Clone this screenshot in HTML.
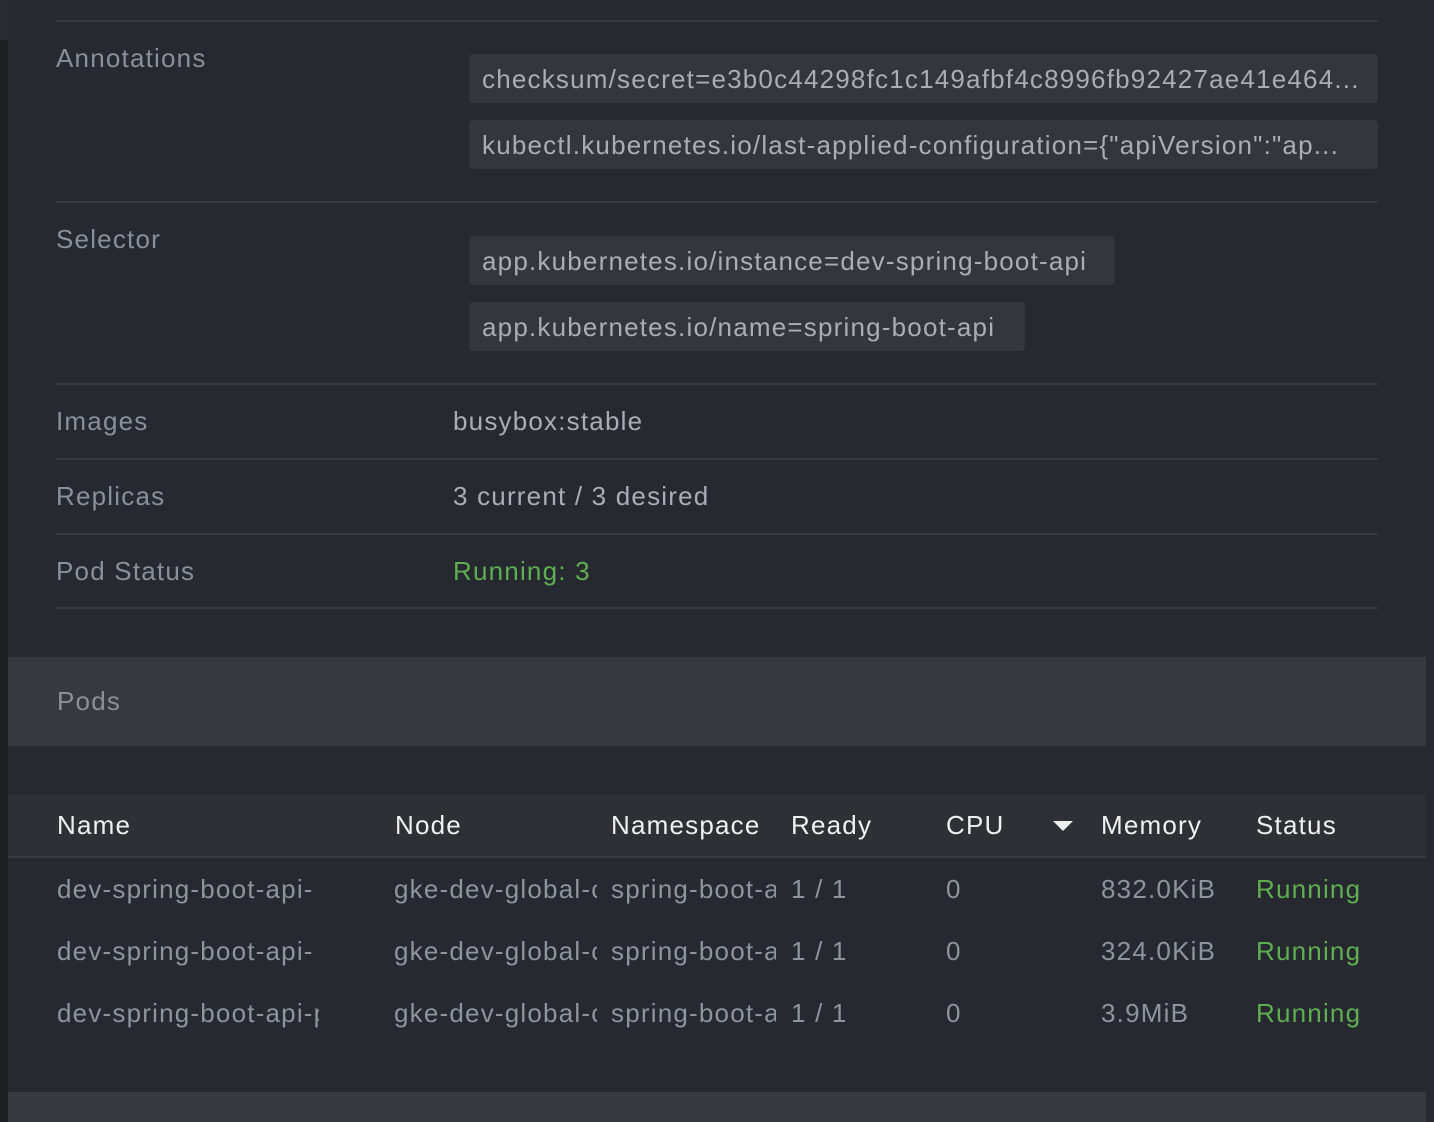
<!DOCTYPE html>
<html><head><style>
body{margin:0;width:1434px;height:1122px;background:#262930;font-family:"Liberation Sans",sans-serif;position:relative;overflow:hidden;font-size:26px;letter-spacing:1.2px}
.a{position:absolute;white-space:nowrap}
.lbl{color:#8a909b}
.val{color:#a9adb4}
.hr{position:absolute;left:56px;width:1322px;height:2px;background:#363940}
.chip{position:absolute;left:469px;height:49px;background:#34363c;border-radius:4px;color:#a9adb4;line-height:51px;padding:0 13px;box-sizing:border-box;white-space:nowrap;overflow:hidden}
.g{color:#5fae51}
.th{color:#f0f0f0}
.td{color:#8e949e;overflow:hidden}
</style></head><body>
<div class="a" style="left:0;top:0;width:8px;height:1122px;background:#1e1f23"></div>
<div class="a" style="left:0;top:0;width:8px;height:40px;background:#2b2c31"></div>
<div class="hr" style="top:20px"></div>
<div class="a lbl" style="left:56px;top:43px">Annotations</div>
<div class="chip" style="top:54px;width:909px">checksum/secret=e3b0c44298fc1c149afbf4c8996fb92427ae41e464...</div>
<div class="chip" style="top:120px;width:909px">kubectl.kubernetes.io/last-applied-configuration={"apiVersion":"ap...</div>
<div class="hr" style="top:201px"></div>
<div class="a lbl" style="left:56px;top:224px">Selector</div>
<div class="chip" style="top:236px;width:646px">app.kubernetes.io/instance=dev-spring-boot-api</div>
<div class="chip" style="top:302px;width:556px">app.kubernetes.io/name=spring-boot-api</div>
<div class="hr" style="top:383px"></div>
<div class="a lbl" style="left:56px;top:406px">Images</div>
<div class="a val" style="left:453px;top:406px">busybox:stable</div>
<div class="hr" style="top:458px"></div>
<div class="a lbl" style="left:56px;top:481px">Replicas</div>
<div class="a val" style="left:453px;top:481px">3 current / 3 desired</div>
<div class="hr" style="top:533px"></div>
<div class="a lbl" style="left:56px;top:556px">Pod Status</div>
<div class="a g" style="left:453px;top:556px">Running: 3</div>
<div class="hr" style="top:607px"></div>
<div class="a" style="left:8px;top:657px;width:1418px;height:89px;background:#38393e"></div>
<div class="a lbl" style="left:57px;top:686px">Pods</div>
<div class="a" style="left:8px;top:794px;width:1418px;height:62px;background:#2f3035"></div>
<div class="a" style="left:8px;top:856px;width:1418px;height:2px;background:#393b41"></div>
<div class="a th" style="left:57px;top:810px">Name</div>
<div class="a th" style="left:395px;top:810px">Node</div>
<div class="a th" style="left:611px;top:810px">Namespace</div>
<div class="a th" style="left:791px;top:810px">Ready</div>
<div class="a th" style="left:946px;top:810px">CPU</div>
<div class="a" style="left:1053px;top:821px;width:0;height:0;border-left:10px solid transparent;border-right:10px solid transparent;border-top:10px solid #f0f0f0"></div>
<div class="a th" style="left:1101px;top:810px">Memory</div>
<div class="a th" style="left:1256px;top:810px">Status</div>

<div class="a td" style="left:57px;top:874px;width:262px">dev-spring-boot-api-</div>
<div class="a td" style="left:394px;top:874px;width:203px">gke-dev-global-cluster</div>
<div class="a td" style="left:611px;top:874px;width:165px">spring-boot-api</div>
<div class="a td" style="left:791px;top:874px">1 / 1</div>
<div class="a td" style="left:946px;top:874px">0</div>
<div class="a td" style="left:1101px;top:874px">832.0KiB</div>
<div class="a g" style="left:1256px;top:874px">Running</div>

<div class="a td" style="left:57px;top:936px;width:262px">dev-spring-boot-api-</div>
<div class="a td" style="left:394px;top:936px;width:203px">gke-dev-global-cluster</div>
<div class="a td" style="left:611px;top:936px;width:165px">spring-boot-api</div>
<div class="a td" style="left:791px;top:936px">1 / 1</div>
<div class="a td" style="left:946px;top:936px">0</div>
<div class="a td" style="left:1101px;top:936px">324.0KiB</div>
<div class="a g" style="left:1256px;top:936px">Running</div>

<div class="a td" style="left:57px;top:998px;width:262px">dev-spring-boot-api-pod</div>
<div class="a td" style="left:394px;top:998px;width:203px">gke-dev-global-cluster</div>
<div class="a td" style="left:611px;top:998px;width:165px">spring-boot-api</div>
<div class="a td" style="left:791px;top:998px">1 / 1</div>
<div class="a td" style="left:946px;top:998px">0</div>
<div class="a td" style="left:1101px;top:998px">3.9MiB</div>
<div class="a g" style="left:1256px;top:998px">Running</div>

<div class="a" style="left:8px;top:1092px;width:1418px;height:30px;background:#38393e"></div>
</body></html>
